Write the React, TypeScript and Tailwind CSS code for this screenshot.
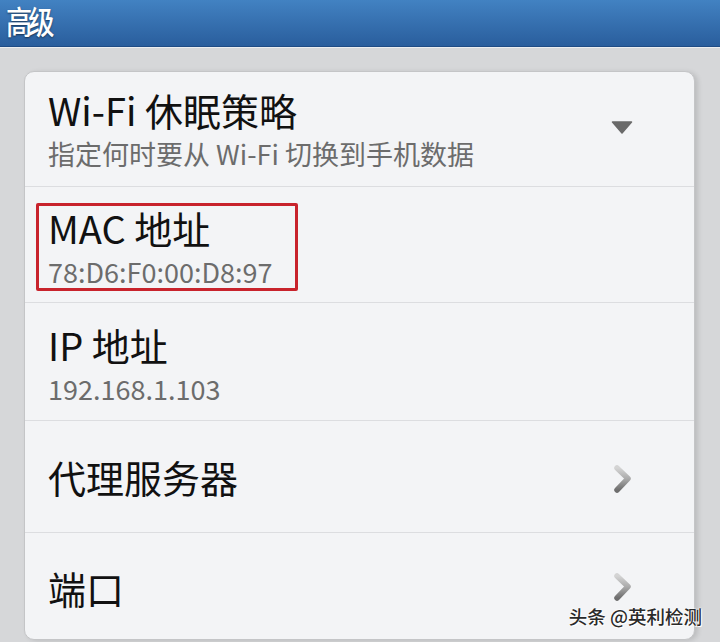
import React from "react";

const CJK = { fontFamily: '"Noto Sans CJK SC", "Noto Sans", sans-serif' };

function Chevron() {
  return (
    <svg width="22" height="30" viewBox="0 0 22 30" className="block">
      <defs>
        <linearGradient id="chg" x1="0" y1="0" x2="0" y2="1">
          <stop offset="0" stopColor="#d4d4d4" />
          <stop offset="0.5" stopColor="#a9a9a9" />
          <stop offset="1" stopColor="#6e6e6e" />
        </linearGradient>
      </defs>
      <path d="M5 4 L16 14.5 L5 26" fill="none" stroke="url(#chg)" strokeWidth="5.5" strokeLinecap="round" strokeLinejoin="round" />
    </svg>
  );
}

function Triangle() {
  return (
    <svg width="22" height="13" viewBox="0 0 22 13" className="block">
      <path d="M1.5 1 L20.5 1 L11 12 Z" fill="#6a6a6a" stroke="#6a6a6a" strokeWidth="1.5" strokeLinejoin="round" />
    </svg>
  );
}

export default function App() {
  return (
    <div className="w-[720px] h-[642px] overflow-hidden bg-[#d6d7d9] flex flex-col" style={CJK}>
      <div className="h-[47px] shrink-0 bg-gradient-to-b from-[#4282c2] to-[#2a5e9d] border-b border-[#1f4c85] flex items-center pl-[6px] pb-[6px]">
        <span className="inline-block origin-left scale-x-[0.82] text-[32px] leading-none font-medium text-white tracking-[-5px] [text-shadow:0_1px_2px_rgba(0,0,0,0.5)]">高级</span>
      </div>
      <div className="h-px bg-[#eceef0] shrink-0" />
      <div className="flex-1 pl-[24px] pr-[25px] pt-[23px]">
        <div className="relative h-[569px] bg-[#f3f4f6] border border-[#c4c5c7] rounded-[10px] shadow-[3px_1px_5px_rgba(0,0,0,0.12)] flex flex-col text-[#111]">
          {/* Row 1 */}
          <div className="h-[115px] shrink-0 border-b border-[#dcdde0] flex items-start pl-[23px] pr-[61px] pt-[12px]">
            <div className="flex-1 flex flex-col">
              <div className="text-[38px] leading-[52px]">Wi-Fi 休眠策略</div>
              <div className="text-[27px] leading-[36px] text-[#6c6c6c]">指定何时要从 Wi-Fi 切换到手机数据</div>
            </div>
            <div className="mt-[37px]">
              <Triangle />
            </div>
          </div>
          {/* Row 2 */}
          <div className="relative h-[116px] shrink-0 border-b border-[#dcdde0] flex flex-col pl-[23px] pt-[15px]">
            <div className="text-[38px] leading-[52px]">MAC 地址</div>
            <div className="text-[27px] leading-[36px] text-[#6c6c6c]">78:D6:F0:00:D8:97</div>
            <div className="absolute left-[11px] top-[16px] w-[262px] h-[88px] border-[3px] border-[#c8232c] rounded-[2px]" />
          </div>
          {/* Row 3 */}
          <div className="h-[118px] shrink-0 border-b border-[#dcdde0] flex flex-col pl-[23px] pt-[16px]">
            <div className="text-[38px] leading-[52px]">IP 地址</div>
            <div className="text-[27px] leading-[36px] text-[#6c6c6c]">192.168.1.103</div>
          </div>
          {/* Row 4 */}
          <div className="h-[112px] shrink-0 border-b border-[#dcdde0] flex items-center pl-[23px] pr-[60px]">
            <div className="flex-1 text-[38px] leading-[52px]">代理服务器</div>
            <div className="pt-[4px]">
              <Chevron />
            </div>
          </div>
          {/* Row 5 */}
          <div className="flex-1 flex items-center pl-[23px] pr-[60px]">
            <div className="flex-1 text-[38px] leading-[52px] pt-[4px]">端口</div>
            <div className="pt-[2px]">
              <Chevron />
            </div>
          </div>
          <div className="absolute right-[-8px] bottom-[14px] text-[18.5px] leading-none font-medium text-[#2a2a2a] [text-shadow:0_0_2px_#fff,0_0_2px_#fff,1px_1px_0_#fff]">
            头条 @英利检测
          </div>
        </div>
      </div>
    </div>
  );
}
